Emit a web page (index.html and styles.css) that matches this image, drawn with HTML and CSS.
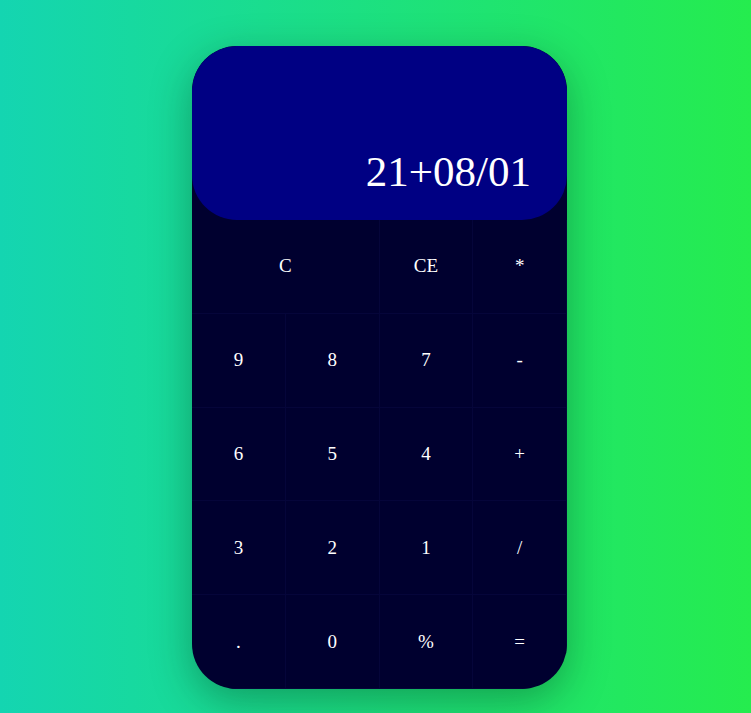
FILE: index.html
```html
<!DOCTYPE html>
<html>
<head>
	<meta charset=utf-8>
	<title>Calculator</title>
	<link rel="stylesheet" href="styles.css">
</head>
<body>
<main class=page>
	<section id=calculator class=calculator>
		<div class=display>
			<span id=screen>21+08/01</span>
		</div>
		<div class=keys>
			<button class="key wide">C</button>
			<button class=key>CE</button>
			<button class=key>*</button>
			<button class=key>9</button>
			<button class=key>8</button>
			<button class=key>7</button>
			<button class=key>-</button>
			<button class=key>6</button>
			<button class=key>5</button>
			<button class=key>4</button>
			<button class=key>+</button>
			<button class=key>3</button>
			<button class=key>2</button>
			<button class=key>1</button>
			<button class=key>/</button>
			<button class=key>.</button>
			<button class=key>0</button>
			<button class=key>%</button>
			<button class=key>=</button>
		</div>
	</section>
</main>
</body>
</html>
```

FILE: styles.css
```css
* {
	margin: 0;
	padding: 0;
	box-sizing: border-box;
}
body {
	font-family: "Liberation Serif", "Times New Roman", serif;
	background: linear-gradient(to right, #14d5b1, #25ec4e);
	min-height: 713px;
}
.page {
	display: flex;
	justify-content: center;
	padding: 46px 0 0 8px;
}
.calculator {
	width: 375px;
	background-color: #00002f;
	border-radius: 45px;
	overflow: hidden;
	box-shadow: 0 12px 40px rgba(0, 40, 20, .35);
}
.display {
	height: 174px;
	background-color: #000083;
	border-radius: 45px;
	display: flex;
	align-items: flex-end;
	justify-content: flex-end;
	padding: 0 36px 24px 0;
	color: white;
	font-size: 43px;
}
.keys {
	display: grid;
	grid-template-columns: repeat(4, 1fr);
	grid-auto-rows: 93.8px;
}
.key {
	background: transparent;
	border: 1px solid #05053a;
	border-width: 0 1px 1px 0;
	color: white;
	font-family: inherit;
	font-size: 19px;
	cursor: pointer;
}
.key.wide {
	grid-column: span 2;
}
```
